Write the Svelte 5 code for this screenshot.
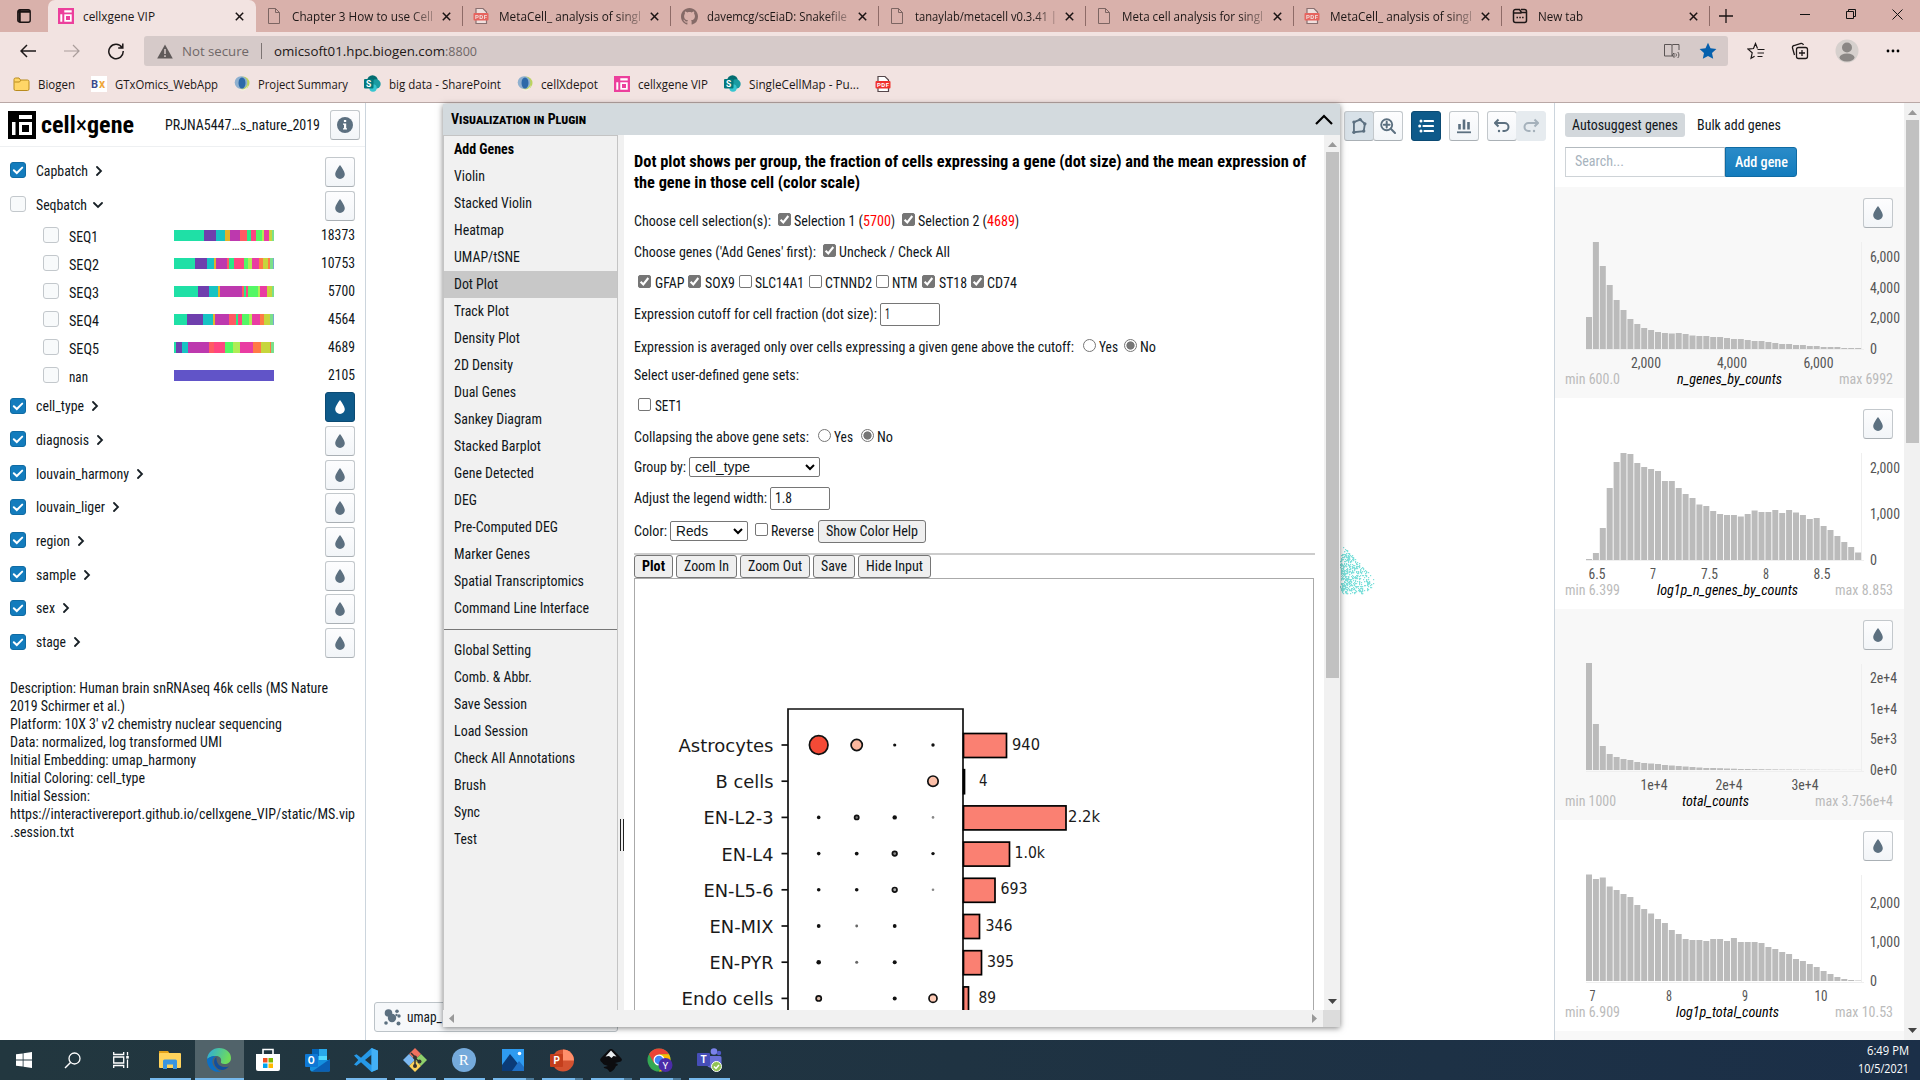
<script>
  const tabs = [
    { icon: 'vip', s: 'cellxgene VIP', w: 72, active: true },
    { icon: 'page', s: 'Chapter 3 How to use Cell', w: 141 },
    { icon: 'pdf', s: 'MetaCell_ analysis of singl', w: 142 },
    { icon: 'git', s: 'davemcg/scEiaD: Snakefile', w: 140 },
    { icon: 'page', s: 'tanaylab/metacell v0.3.41 |', w: 142 },
    { icon: 'page', s: 'Meta cell analysis for singl', w: 141 },
    { icon: 'pdf', s: 'MetaCell_ analysis of singl', w: 142 },
    { icon: 'new', s: 'New tab', w: 45 }
  ];
  const bookmarks = [
    ['folder', 'Biogen', 37], ['bx', 'GTxOmics_WebApp', 103], ['globe', 'Project Summary', 90],
    ['sp', 'big data - SharePoint', 112], ['globe', 'cellXdepot', 57], ['vip', 'cellxgene VIP', 70],
    ['sp', 'SingleCellMap - Pu...', 110], ['pdf2', '', 0]
  ];
  const G = '#1fe0a6', P = '#6f3fad', T = '#17c3c3', M = '#bd39ae', R = '#ff5a63', K = '#ff4581', L = '#54f766', Y = '#b0ec55', Q = '#e93ca2', O = '#ff7a45', V = '#c6d63c', A = '#e2b32c', E = '#7be08a', S = '#2bea86', B = '#79a9d0';
  const cats1 = [{ s: 'Capbatch', w: 52, on: true }, { s: 'Seqbatch', w: 51, on: false, open: true }];
  const seqs = [
    { s: 'SEQ1', w: 29, n: '18373', nw: 34, b: [[G, 30], [P, 12], [T, 9], [A, 5], [M, 10], [R, 7], [S, 4], [K, 5], [L, 6], [Y, 2], [Q, 5], [V, 3], [E, 2]] },
    { s: 'SEQ2', w: 30, n: '10753', nw: 34, b: [[G, 21], [P, 12], [T, 7], [A, 2], [M, 11], [R, 2], [S, 5], [K, 10], [L, 4], [Y, 4], [Q, 7], [O, 4], [V, 5], [O, 2], [E, 3], [B, 1]] },
    { s: 'SEQ3', w: 30, n: '5700', nw: 27, b: [[G, 24], [P, 11], [T, 9], [A, 2], [M, 22], [R, 2], [S, 2], [K, 2], [L, 10], [Y, 2], [Q, 7], [V, 5], [E, 2]] },
    { s: 'SEQ4', w: 30, n: '4564', nw: 27, b: [[G, 13], [P, 16], [T, 10], [A, 2], [M, 14], [R, 7], [S, 2], [K, 4], [L, 7], [Y, 3], [Q, 8], [O, 4], [V, 6], [E, 3], [B, 1]] },
    { s: 'SEQ5', w: 30, n: '4689', nw: 27, b: [[G, 2], [P, 6], [T, 6], [M, 21], [R, 5], [K, 11], [L, 8], [Y, 7], [Q, 13], [O, 8], [V, 9], [O, 1], [E, 3]] },
    { s: 'nan', w: 19, n: '2105', nw: 27, b: [['#6154c8', 100]] }
  ];
  const cats2 = [
    { s: 'cell_type', w: 48, on: true, sel: true }, { s: 'diagnosis', w: 53, on: true },
    { s: 'louvain_harmony', w: 93, on: true }, { s: 'louvain_liger', w: 69, on: true },
    { s: 'region', w: 34, on: true }, { s: 'sample', w: 40, on: true },
    { s: 'sex', w: 19, on: true }, { s: 'stage', w: 30, on: true }
  ];
  const desc = [
    ['Description: Human brain snRNAseq 46k cells (MS Nature', 318], ['2019 Schirmer et al.)', 115],
    ["Platform: 10X 3' v2 chemistry nuclear sequencing", 272], ['Data: normalized, log transformed UMI', 212],
    ['Initial Embedding: umap_harmony', 186], ['Initial Coloring: cell_type', 135], ['Initial Session:', 80],
    ['https://interactivereport.github.io/cellxgene_VIP/static/MS.vip', 345], ['.session.txt', 64]
  ];
  const menu1 = [
    ['Add Genes', 60], ['Violin', 31], ['Stacked Violin', 78], ['Heatmap', 50], ['UMAP/tSNE', 66], ['Dot Plot', 44],
    ['Track Plot', 55], ['Density Plot', 66], ['2D Density', 59], ['Dual Genes', 62], ['Sankey Diagram', 88],
    ['Stacked Barplot', 87], ['Gene Detected', 80], ['DEG', 23], ['Pre-Computed DEG', 104], ['Marker Genes', 76],
    ['Spatial Transcriptomics', 130], ['Command Line Interface', 135]
  ];
  const menu2 = [
    ['Global Setting', 77], ['Comb. & Abbr.', 78], ['Save Session', 73], ['Load Session', 74],
    ['Check All Annotations', 121], ['Brush', 32], ['Sync', 26], ['Test', 23]
  ];
  const genes = [['GFAP', 29.5, 1], ['SOX9', 30, 1], ['SLC14A1', 49, 0], ['CTNND2', 47, 0], ['NTM', 25.5, 0], ['ST18', 28, 1], ['CD74', 30, 1]];
  const hists = [
    {
      name: 'n_genes_by_counts', nw: 105, min: 'min 600.0', minw: 55, max: 'max 6992', maxw: 54,
      h: [32, 107, 83, 64, 49, 39, 30, 25, 21, 19, 17, 16, 15.5, 16, 15, 13.5, 13, 13, 12, 12, 11, 10, 10, 9, 8, 8, 7, 6, 5, 5, 4, 4, 3, 3, 2, 2, 2, 1, 1, 1],
      y: [['6,000', 70, 30], ['4,000', 101, 30], ['2,000', 131, 30], ['0', 162, 7]],
      x: [['2,000', 91, 30], ['4,000', 177, 30], ['6,000', 263.5, 30]]
    },
    {
      name: 'log1p_n_genes_by_counts', nw: 141, min: 'min 6.399', minw: 55, max: 'max 8.853', maxw: 58,
      h: [1, 7, 32, 72, 98, 107, 106, 97, 93, 91, 89, 79, 79, 72, 66, 62, 55.5, 54, 49, 46, 45, 45, 43.5, 46, 49.5, 48, 48, 50, 47, 50, 47.5, 45, 41, 42, 34, 30, 24, 18, 13, 7.5],
      y: [['2,000', 70, 30], ['1,000', 116, 30], ['0', 162, 7]],
      x: [['6.5', 42, 17], ['7', 98, 6], ['7.5', 154.5, 17], ['8', 211, 6], ['8.5', 267, 17]]
    },
    {
      name: 'total_counts', nw: 67, min: 'min 1000', minw: 51, max: 'max 3.756e+4', maxw: 78,
      h: [107, 46, 24, 16, 13, 11, 10, 8, 7, 6.5, 6, 5, 4.5, 4, 3.5, 3, 2.5, 2, 2, 1.8, 1.5, 1.3, 1, 1, 0.9, 0.8, 0.7, 0.6, 0.5, 0.5, 0.4, 0.4, 0.3, 0.3, 0.2, 0.2, 0.2, 0.1, 0.1, 0.1],
      y: [['2e+4', 69, 27], ['1e+4', 100, 27], ['5e+3', 130, 27], ['0e+0', 161, 27]],
      x: [['1e+4', 99, 27], ['2e+4', 174, 27], ['3e+4', 250, 27]]
    },
    {
      name: 'log1p_total_counts', nw: 103, min: 'min 6.909', minw: 55, max: 'max 10.53', maxw: 58,
      h: [106.5, 102, 103.5, 94.5, 91, 87, 84, 76, 72, 67.5, 62, 58, 51, 47, 42, 41, 41, 40, 42, 42, 40, 43, 39, 39, 39, 38, 34, 32, 29, 27, 22, 20, 17, 14, 10, 7, 4, 2, 1, 0.5],
      y: [['2,000', 83, 30], ['1,000', 122, 30], ['0', 161, 7]],
      x: [['7', 37.5, 6], ['8', 114, 6], ['9', 190, 6], ['10', 266, 13]]
    }
  ];
  // Each plot row: label, label width, dots [radius, fill] per gene, bar width, count, count x, count width
  const D = '#111', N = null;
  const plotRows = [
    ['Astrocytes', 95, [[9.3, '#f44a36'], [5.6, '#fcb79e'], [1.6, D], [1.7, D]], 43, '940', 378, 28],
    ['B cells', 58, [N, N, N, [5.2, '#fcbfa8']], 1, '4', 345, 8.5],
    ['EN-L2-3', 70, [[1.8, D], [2.1, '#777'], [2.2, D], [1.3, '#888']], 102.5, '2.2k', 434, 32],
    ['EN-L4', 52, [[1.8, D], [1.9, D], [2.3, '#888'], [1.7, D]], 46, '1.0k', 380.5, 30.5],
    ['EN-L5-6', 70, [[1.8, D], [1.8, D], [2.3, '#aaa'], [1.3, '#888']], 31.5, '693', 366.5, 27],
    ['EN-MIX', 64, [[1.9, D], [1.4, '#666'], [1.9, D], N], 16, '346', 351.5, 27],
    ['EN-PYR', 64, [[2.3, D], [1.5, '#666'], [2, D], N], 18, '395', 353, 27],
    ['Endo cells', 92, [[2.6, '#d8b8a8'], N, [2, D], [4, '#fdcab5']], 5, '89', 344.5, 17.5]
  ];
  const dotX = [184.7, 222.7, 260.7, 299];

  // Deterministic scatter of embedding points that fan out to the right
  let seed = 11;
  const rnd = () => ((seed = (seed * 16807) % 2147483647) / 2147483647);
  const cells = [];
  while (cells.length < 520) {
    const x = rnd() * 34, y = rnd() * 53;
    const top = 2 + x * 1.05, bottom = 52 - Math.max(0, x - 24) * 0.7;
    if (y > top && y < bottom && rnd() < 1.1 - x / 38 && (y > 12 || rnd() < 0.3)) cells.push([Math.round(x), Math.round(y)]);
  }
  const apps = ['start', 'search', 'task', 'files', 'edge', 'store', 'outlook', 'code', 'gitb', 'r', 'photos', 'ppt', 'ink', 'chrome', 'teams'];
  const running = { files: 1, edge: 1, code: 1, gitb: 1, r: 1, photos: 2, ppt: 2, ink: 2, chrome: 2, teams: 1 };
</script>

{#snippet t(s, w, cls = '')}
  <svg class="t {cls}" width={w} height="20"><text x="0" y="15" textLength={w} lengthAdjust="spacingAndGlyphs">{s}</text></svg>
{/snippet}

{#snippet drop()}
  <svg width="16" height="16" viewBox="0 0 16 16"><path fill="currentColor" d="M8 1C8 1 3.200 7 3.200 10.200a4.800 4.800 0 0 0 9.600 0C12.800 7 8 1 8 1z" /></svg>
{/snippet}

{#snippet cb(on)}
  <span class="cb" class:on>
    {#if on}<svg width="13" height="13" viewBox="0 0 13 13"><path d="M2.600 6.700l2.700 2.800 5-6.500" fill="none" stroke="#fff" stroke-width="2.100" /></svg>{/if}
  </span>
{/snippet}

{#snippet radio(on)}<span class="radio" class:on></span>{/snippet}

{#snippet fav(k)}
  {#if k === 'vip'}
    <svg width="16" height="16" viewBox="0 0 28 28"><rect width="28" height="28" fill="#ec3f9c" /><path fill="#fff" d="M4 11h3.500v13H4zM11 4h13v4H11z" /><rect x="12.500" y="12.500" width="10" height="10" fill="none" stroke="#fff" stroke-width="3" /></svg>
  {:else if k === 'page'}
    <svg width="16" height="18" viewBox="0 0 16 18"><path d="M2.500 1.500h7l4 4v11h-11zM9.500 1.500v4h4" fill="none" stroke="#7c6562" /></svg>
  {:else if k === 'pdf' || k === 'pdf2'}
    <svg class:faded={k === 'pdf'} width="16" height="18" viewBox="0 0 16 18"><path d="M3 1.500h7l3.500 3.500v11.500H3z" fill="#fff" stroke="#55464a" stroke-width="1.200" /><rect x=".5" y="6" width="15" height="7.500" rx="1" fill="#f0312d" /><text x="2" y="12" font-size="6" font-weight="700" fill="#fff" textLength="12">PDF</text></svg>
  {:else if k === 'git'}
    <svg width="17" height="17" viewBox="0 0 16 16"><path fill="#856a67" fill-rule="evenodd" d="M8 0C3.580 0 0 3.580 0 8c0 3.540 2.290 6.530 5.470 7.590.4.070.55-.17.55-.38 0-.19-.01-.82-.01-1.490-2.010.37-2.530-.49-2.690-.94-.09-.23-.48-.94-.82-1.130-.28-.15-.68-.52-.01-.53.63-.01 1.080.58 1.230.82.72 1.210 1.870.87 2.330.66.070-.52.28-.87.51-1.070-1.780-.2-3.640-.89-3.640-3.950 0-.87.31-1.590.82-2.150-.08-.2-.36-1.020.08-2.120 0 0 .67-.21 2.200.82.64-.18 1.320-.27 2-.27s1.360.09 2 .27c1.530-1.040 2.200-.82 2.200-.82.44 1.100.16 1.920.08 2.120.51.56.82 1.270.82 2.150 0 3.070-1.870 3.750-3.650 3.950.29.25.54.73.54 1.480 0 1.070-.01 1.930-.01 2.200 0 .21.15.46.55.38A8.010 8.010 0 0 0 16 8c0-4.420-3.580-8-8-8z" /></svg>
  {:else if k === 'new'}
    <svg width="16" height="16" viewBox="0 0 16 16"><path d="M1.500 3.500a2 2 0 0 1 2-2h4l2 3h5v8a2 2 0 0 1-2 2h-9a2 2 0 0 1-2-2zM1.500 5h8M9 1.500h3.500a2 2 0 0 1 2 2v2" fill="none" stroke="#1c1616" stroke-width="1.500" /><path d="M4.500 9.500h1.500M7.300 9.500h1.500M10.100 9.500h1.500" stroke="#1c1616" stroke-width="1.600" /></svg>
  {:else if k === 'folder'}
    <svg width="17" height="16" viewBox="0 0 17 16"><path d="M1 3.500a1.500 1.500 0 0 1 1.500-1.500H6l1.500 2h7A1.500 1.500 0 0 1 16 5.500V13a1.500 1.500 0 0 1-1.500 1.500h-12A1.500 1.500 0 0 1 1 13z" fill="#ffd667" stroke="#b98b1d" /><path d="M1.500 6h5l1.500-2" fill="none" stroke="#b98b1d" /></svg>
  {:else if k === 'bx'}
    <svg width="16" height="16" viewBox="0 0 16 16"><rect width="16" height="16" fill="#fff" /><text x="0" y="11.500" font-size="11" font-weight="700" fill="#3b4a8c">B</text><text x="8" y="11.500" font-size="12" font-weight="700" fill="#efa63a">x</text></svg>
  {:else if k === 'globe'}
    <svg width="16" height="16" viewBox="0 0 16 16"><circle cx="9" cy="7" r="6.500" fill="#bcd35f" /><circle cx="7" cy="6.500" r="6.300" fill="#8fb0cf" /><ellipse cx="8" cy="7" rx="3.500" ry="5.500" fill="#2c69a8" /><path d="M4 12c3 3 8 2 10-3-1 5-6 8-10 3z" fill="#f3f6e0" /></svg>
  {:else if k === 'sp'}
    <svg width="17" height="17" viewBox="0 0 17 17"><circle cx="8.500" cy="5.500" r="5.300" fill="#036c70" /><circle cx="12" cy="9" r="4.700" fill="#1a9ba1" /><circle cx="9" cy="13" r="3.700" fill="#37c6d0" /><rect y="4" width="9.500" height="9.500" rx="1" fill="#03787c" /><text x="2" y="11.700" font-size="8.500" font-weight="700" fill="#fff">S</text></svg>
  {/if}
{/snippet}

{#snippet cat(c)}
  <div class="cat">
    <span class="bcheck" class:on={c.on}>
      {#if c.on}<svg width="16" height="16" viewBox="0 0 16 16"><path d="M3.800 8.200l3 2.800 5.400-5.400" fill="none" stroke="#fff" stroke-width="2" stroke-linecap="round" /></svg>{/if}
    </span>
    {@render t(c.s, c.w)}
    <svg class="chev" width="10" height="10" viewBox="0 0 10 10"><path d={c.open ? 'M1 3l4 4 4-4' : 'M3 1l4 4-4 4'} fill="none" stroke="#182026" stroke-width="1.800" stroke-linecap="round" /></svg>
    <span class="btn push" class:sel={c.sel}>{@render drop()}</span>
  </div>
{/snippet}

<div class="screen">
  <header class="tabs">
    <svg class="actions" width="14" height="14" viewBox="0 0 14 14"><rect x=".8" y=".8" width="12.400" height="12.400" rx="2" fill="none" stroke="#1a1313" stroke-width="1.400" /><path d="M1 2.500h12M2.500 1v12" stroke="#1a1313" stroke-width="2.500" /></svg>
    {#each tabs as tab}
      <div class="tab" class:active={tab.active}>
        <span class="fav">{@render fav(tab.icon)}</span>
        <span class="title">{@render t(tab.s, tab.w, 'ui')}</span>
        <svg width="9" height="9" viewBox="0 0 9 9"><path d="M.8.8l7.400 7.400M8.200.8L.8 8.200" stroke="#1a1313" stroke-width="1.500" /></svg>
      </div>
    {/each}
    <svg class="plus" width="14" height="14" viewBox="0 0 14 14"><path d="M7 0v14M0 7h14" stroke="#1a1313" stroke-width="1.300" /></svg>
    <div class="win">
      <svg width="10" height="10"><path d="M0 5.500h10" stroke="#111" /></svg>
      <svg width="10" height="10"><path d="M.5 2.500h7v7h-7zM2.500 2.500v-2h7v7h-2" fill="none" stroke="#111" /></svg>
      <svg width="11" height="11"><path d="M.5.5l10 10M10.500.5l-10 10" stroke="#111" /></svg>
    </div>
  </header>

  <div class="address">
    <svg class="back" width="16" height="14" viewBox="0 0 16 14"><path d="M16 7H1M7 1L1 7l6 6" fill="none" stroke="#1d1818" stroke-width="1.500" /></svg>
    <svg class="fwd" width="16" height="14" viewBox="0 0 16 14"><path d="M0 7h15M9 1l6 6-6 6" fill="none" stroke="#aa9d9b" stroke-width="1.200" /></svg>
    <svg class="reload" width="18" height="18" viewBox="0 0 18 18"><path d="M15 5.500A7.200 7.200 0 1 0 16.200 9M15.800 1.500v4.500h-4.600" fill="none" stroke="#1d1818" stroke-width="1.500" /></svg>
    <div class="pill">
      <svg width="16" height="15" viewBox="0 0 16 15"><path d="M8 .5L15.800 14.500H.2z" fill="#605a5a" /><path d="M8 5v5M8 11.300v1.700" stroke="#d6cac9" stroke-width="1.500" /></svg>
      {@render t('Not secure', 67, 'ui grey')}
      <i></i>
      {@render t('omicsoft01.hpc.biogen.com', 171, 'ui')}
      {@render t(':8800', 32, 'ui grey')}
      <svg class="push" width="18" height="18" viewBox="0 0 18 18"><path d="M9 14H1.500V2.500H8q1 0 1 1V14M9 3.500q0-1 1-1h6V8M11 11l-1.500 1.500v1.500L11 15.500zM12.800 11.500c.8 1 .8 2 0 3M14.800 10c1.500 2 1.500 4 0 6" fill="none" stroke="#5b5454" /></svg>
      <svg class="star" width="18" height="18" viewBox="0 0 18 18"><path d="M9 .8l2.500 5.400 5.900.7-4.400 4 1.200 5.900L9 13.900l-5.200 2.900L5 10.900l-4.400-4 5.900-.7z" fill="#0560ad" /></svg>
    </div>
    <div class="tools">
      <svg width="18" height="18" viewBox="0 0 18 18"><path d="M10.500 6.500L8.500 1.500 6.500 6.500l-5.500.6 4.200 3.700-1.200 5.500 3.600-2M10.500 7.500h7M10.500 11h6.500M10.500 14.500h5" fill="none" stroke="#1d1818" stroke-width="1.200" /></svg>
      <svg width="18" height="18" viewBox="0 0 18 18"><rect x="5.500" y="5.500" width="11" height="11" rx="2" fill="none" stroke="#1d1818" stroke-width="1.300" /><path d="M11 8v6M8 11h6M3.500 13l-2-7a2 2 0 0 1 1.500-2.500l7-2a2 2 0 0 1 2.400 1.500" fill="none" stroke="#1d1818" stroke-width="1.300" /></svg>
      <svg width="24" height="24" viewBox="0 0 24 24"><circle cx="12" cy="12" r="11.500" fill="#d6d0cd" /><circle cx="12" cy="8.500" r="5" fill="#8b8785" /><ellipse cx="12" cy="18.500" rx="7.500" ry="4" fill="#8b8785" /></svg>
      <svg width="14" height="4" viewBox="0 0 14 4"><circle cx="2" cy="2" r="1.400" /><circle cx="7" cy="2" r="1.400" /><circle cx="12" cy="2" r="1.400" /></svg>
    </div>
  </div>

  <nav class="bookmarks">
    {#each bookmarks as [k, s, w]}
      <span class="bm">{@render fav(k)}{#if s}{@render t(s, w, 'ui small')}{/if}</span>
    {/each}
  </nav>

  <main>
    <aside class="left">
      <div class="brand">
        <svg width="28" height="28" viewBox="0 0 28 28"><rect width="28" height="28" /><path fill="#fff" d="M4 11h3.500v13H4zM11 4h13v4H11z" /><rect x="12.500" y="12.500" width="10" height="10" fill="none" stroke="#fff" stroke-width="3" /></svg>
        <svg class="logo" width="93" height="28"><text x="0" y="22" textLength="93" lengthAdjust="spacingAndGlyphs">cell<tspan class="x">×</tspan>gene</text></svg>
        {@render t('PRJNA5447…s_nature_2019', 155)}
        <span class="btn info"><svg width="16" height="16" viewBox="0 0 16 16"><circle cx="8" cy="8" r="8" fill="#5c7080" /><path d="M6.900 3h2.300v2H6.900zM6 6.500h3.200v4.700H10v1.300H6v-1.300h1V7.800H6z" fill="#fff" /></svg></span>
      </div>
      <div class="cats">
        {#each cats1 as c}{@render cat(c)}{/each}
        {#each seqs as q}
          <div class="seq">
            <span class="bcheck"></span>
            <span class="sl">{@render t(q.s, q.w)}</span>
            <span class="strip">{#each q.b as [c, w]}<i style="background:{c};flex-grow:{w}"></i>{/each}</span>
            <span class="push num">{@render t(q.n, q.nw)}</span>
          </div>
        {/each}
        {#each cats2 as c}{@render cat(c)}{/each}
      </div>
      <div class="desc">{#each desc as [s, w]}<div>{@render t(s, w)}</div>{/each}</div>
    </aside>

    <section class="canvas">
      <div class="toolbar">
        <div class="grp">
          <span class="btn act"><svg width="18" height="18" viewBox="0 0 16 16"><path d="M3.500 4.500L9 2.300l4.200 3.800-1 6.400-8.700 1z" fill="none" stroke="#5c7080" stroke-width="1.600" /><g fill="#5c7080"><circle cx="3.500" cy="4.500" r="1.500" /><circle cx="9" cy="2.300" r="1.500" /><circle cx="13.200" cy="6.100" r="1.500" /><circle cx="12.200" cy="12.500" r="1.500" /><circle cx="3.500" cy="13.500" r="1.500" /></g></svg></span>
          <span class="btn"><svg width="16" height="16" viewBox="0 0 16 16"><circle cx="6.700" cy="6.700" r="5.500" fill="none" stroke="#5c7080" stroke-width="1.900" /><path d="M6.700 3.800v5.800M3.800 6.700h5.800M10.800 10.800l4.200 4.200" stroke="#5c7080" stroke-width="2" stroke-linecap="round" /></svg></span>
        </div>
        <span class="btn sel"><svg width="16" height="16" viewBox="0 0 16 16"><g fill="#fff"><circle cx="3" cy="3" r="1.500" /><circle cx="1.700" cy="8" r="1.500" /><circle cx="3" cy="13" r="1.500" /></g><path d="M6.500 3H15M5.500 8H15M6.500 13H15" stroke="#fff" stroke-width="2.200" stroke-linecap="round" /></svg></span>
        <span class="btn"><svg width="16" height="16" viewBox="0 0 16 16"><path d="M3.500 6v5.500M8 1.500v10M12.500 4v7.500" stroke="#5c7080" stroke-width="2.600" /><path d="M1 14.300h14" stroke="#5c7080" stroke-width="1.800" /></svg></span>
        <div class="grp">
          <span class="btn"><svg width="16" height="16" viewBox="0 0 16 16"><path d="M1.500 5h9a4 4 0 0 1 0 8H8.500M4.500 1.500L1 5l3.500 3.500" fill="none" stroke="#5c7080" stroke-width="2" /><circle cx="5" cy="13" r="1.200" fill="#5c7080" /></svg></span>
          <span class="btn dis"><svg width="16" height="16" viewBox="0 0 16 16"><path d="M14.500 5h-9a4 4 0 0 0 0 8h2M11.500 1.500L15 5l-3.500 3.500" fill="none" stroke="#a5b1bb" stroke-width="2" /><circle cx="11" cy="13" r="1.200" fill="#a5b1bb" /></svg></span>
        </div>
      </div>
      <svg class="points" width="40" height="56">{#each cells as [x, y]}<rect {x} {y} width="1.200" height="1.200" fill="#7fe0db" />{/each}</svg>
      <div class="embed">
        <svg width="17" height="17" viewBox="0 0 17 17" fill="#5c7080"><circle cx="4.500" cy="4" r="3.800" /><circle cx="8" cy="9" r="4.200" /><circle cx="13" cy="2.200" r="1.800" /><circle cx="15" cy="7" r="1.700" /><circle cx="12.500" cy="6" r="1.200" /><circle cx="2" cy="14" r="1.800" /><circle cx="14.500" cy="14.500" r="2" /></svg>
        {@render t('umap_', 35)}
      </div>

      <div class="vip">
        <div class="vhead">
          {@render t('Visualization in Plugin', 135, 'b caps')}
          <svg width="18" height="11" viewBox="0 0 18 11"><path d="M1 10l8-8 8 8" fill="none" stroke="#000" stroke-width="2.200" /></svg>
        </div>
        <div class="vbody">
          <div class="menu">
            {#each menu1 as [s, w], i}<div class="item" class:cur={s === 'Dot Plot'}>{@render t(s, w, i ? '' : 'b')}</div>{/each}
            <hr />
            {#each menu2 as [s, w]}<div class="item">{@render t(s, w)}</div>{/each}
          </div>
          <div class="split"><b></b></div>
          <div class="content">
            <div class="lead">{@render t('Dot plot shows per group, the fraction of cells expressing a gene (dot size) and the mean expression of', 672, 'b big')}{@render t('the gene in those cell (color scale)', 226, 'b big')}</div>
            <div class="form">
              <div class="row">{@render t('Choose cell selection(s):', 137)}{@render cb(true)}{@render t('Selection 1 (', 69)}{@render t('5700', 28, 'red')}{@render t(')', 4)}{@render cb(true)}{@render t('Selection 2 (', 69)}{@render t('4689', 28, 'red')}{@render t(')', 4)}</div>
              <div class="row">{@render t("Choose genes ('Add Genes' first):", 182)}{@render cb(true)}{@render t('Uncheck / Check All', 111)}</div>
              <div class="row genes">{#each genes as [s, w, on]}{@render cb(!!on)}{@render t(s, w)}{/each}</div>
              <div class="row">{@render t('Expression cutoff for cell fraction (dot size):', 243)}<span class="field">{@render t('1', 5)}</span></div>
              <div class="row">{@render t('Expression is averaged only over cells expressing a given gene above the cutoff:', 440)}<u></u>{@render radio(false)}{@render t('Yes', 19)}{@render radio(true)}{@render t('No', 16)}</div>
              <div class="row">{@render t('Select user-defined gene sets:', 165)}</div>
              <div class="row genes">{@render cb(false)}{@render t('SET1', 27)}</div>
              <div class="row">{@render t('Collapsing the above gene sets:', 175)}<u></u>{@render radio(false)}{@render t('Yes', 19)}<u></u>{@render radio(true)}{@render t('No', 16)}</div>
              <div class="row">{@render t('Group by:', 52)}<span class="select wide">{@render t('cell_type', 55, 'arial')}<svg width="10" height="8" viewBox="0 0 10 8"><path d="M1 2l4 4 4-4" fill="none" stroke="#000" stroke-width="2" /></svg></span></div>
              <div class="row">{@render t('Adjust the legend width:', 133)}<span class="field">{@render t('1.8', 17)}</span></div>
              <div class="row">{@render t('Color:', 33)}<span class="select">{@render t('Reds', 32, 'arial')}<svg width="10" height="8" viewBox="0 0 10 8"><path d="M1 2l4 4 4-4" fill="none" stroke="#000" stroke-width="2" /></svg></span>{@render cb(false)}{@render t('Reverse', 43)}<span class="pb">{@render t('Show Color Help', 92)}</span></div>
            </div>
            <div class="actionsrow">
              <span class="pb">{@render t('Plot', 23, 'b')}</span><span class="pb">{@render t('Zoom In', 45)}</span><span class="pb">{@render t('Zoom Out', 54)}</span><span class="pb">{@render t('Save', 26)}</span><span class="pb">{@render t('Hide Input', 57)}</span>
            </div>
            <div class="plot">
              <svg class="fig" width="678" height="432" viewBox="1 1 678 432">
                <path d="M154 440V131H329V440" fill="none" stroke="#111" stroke-width="1.700" />
                {#each plotRows as [s, w, dots, bw, n, nx, nw], i}
                  {@const y = 167 + i * 36.2}
                  <text x={139.5 - w} y={y + 7} font-size="18" textLength={w} lengthAdjust="spacingAndGlyphs">{s}</text>
                  <path d="M147.500 {y}H154" stroke="#111" stroke-width="1.700" />
                  {#each dots as d, j}{#if d}<circle cx={dotX[j]} cy={y} r={d[0]} fill={d[1]} stroke="#111" stroke-width={d[0] > 2 && d[1] !== D ? 1.7 : d[1] === '#777' ? 1.5 : 0} />{/if}{/each}
                  <rect x="329.500" y={y - 11.5} width={bw} height="24" fill="#fa8072" stroke="#000" stroke-width="1.700" />
                  <text x={nx} y={y + 4.5} font-size="15" textLength={nw} lengthAdjust="spacingAndGlyphs">{n}</text>
                {/each}
              </svg>
            </div>
          </div>
          <div class="vscroll"><svg width="9" height="5"><path d="M0 5l4.500-5L9 5z" fill="#999" /></svg><b></b><svg width="9" height="5"><path d="M0 0l4.500 5L9 0z" fill="#444" /></svg></div>
        </div>
        <div class="hscroll"><svg width="5" height="9"><path d="M5 0L0 4.500 5 9z" fill="#999" /></svg><svg width="5" height="9"><path d="M0 0l5 4.500L0 9z" fill="#999" /></svg><b></b></div>
      </div>
    </section>

    <aside class="right">
      <div class="rtop">
        <div class="rtabs"><span class="on">{@render t('Autosuggest genes', 106)}</span><span>{@render t('Bulk add genes', 84)}</span></div>
        <div class="search"><span class="inp">{@render t('Search...', 49, 'ph')}</span><span class="add">{@render t('Add gene', 53, 'm')}</span></div>
      </div>
      {#each hists as h}
        <div class="hist">
          <svg class="chart" width="349" height="184">
            <path d="M306.500 55V162M31 162.500H309" stroke="#efefef" fill="none" />
            {#each h.h as v, i}<rect x={31 + i * 6.9} y={h.y.at(-1)[1] - v} width="6" height={v} fill="#bbb" />{/each}
            {#each h.y as [s, y, w]}<text x="315" y={y + 5} textLength={w} lengthAdjust="spacingAndGlyphs">{s}</text>{/each}
            {#each h.x as [s, x, w]}<text x={x - w / 2} y="181" textLength={w} lengthAdjust="spacingAndGlyphs">{s}</text>{/each}
          </svg>
          <span class="btn">{@render drop()}</span>
          <div class="names">{@render t(h.min, h.minw, 'light')}{@render t(h.name, h.nw, 'it')}{@render t(h.max, h.maxw, 'light')}</div>
        </div>
      {/each}
      <div class="rest"></div>
    </aside>
    <div class="pscroll"><svg width="9" height="5"><path d="M0 5l4.500-5L9 5z" fill="#999" /></svg><b></b><svg width="9" height="5"><path d="M0 0l4.500 5L9 0z" fill="#444" /></svg></div>
  </main>

  <footer>
    {#each apps as a}
      <span class="app" class:focus={a === 'edge'} class:run={running[a]} class:multi={running[a] === 2}>
        {#if a === 'start'}<svg width="16" height="16" viewBox="0 0 16 16"><path fill="#fff" d="M0 2.300L6.700 1.400V7.600H0zM7.500 1.300L16 0v7.600H7.500zM0 8.400h6.700v6.200L0 13.700zM7.500 8.400H16V16l-8.500-1.300z" /></svg>
        {:else if a === 'search'}<svg width="17" height="17" viewBox="0 0 17 17"><circle cx="10.500" cy="6.500" r="5.500" fill="none" stroke="#fff" stroke-width="1.300" /><path d="M6.500 10.500L1 16" stroke="#fff" stroke-width="1.400" /></svg>
        {:else if a === 'task'}<svg width="17" height="16" viewBox="0 0 17 16"><path d="M.7 0v2.500h10V0M.7 5h10v6h-10zM.7 16v-2.500h10V16M14.500 0v3.500M14.500 7.500V16" fill="none" stroke="#fff" stroke-width="1.300" /><rect x="13.200" y="4" width="2.600" height="2.600" fill="#fff" /></svg>
        {:else if a === 'files'}<svg width="24" height="20" viewBox="0 0 24 20"><path d="M1 1h9l2 3H1z" fill="#e3a21a" /><rect x="1" y="3" width="22" height="15" rx="1" fill="#ffd35c" /><path d="M5 19v-8a1.500 1.500 0 0 1 1.500-1.500h11A1.500 1.500 0 0 1 19 11v8h-4v-4.500H9V19z" fill="#3b95e0" /></svg>
        {:else if a === 'edge'}<svg width="24" height="24" viewBox="0 0 24 24"><defs><linearGradient id="eg" x1="0" y1="0" x2="1" y2=".3"><stop offset="0" stop-color="#2aa9e0" /><stop offset="1" stop-color="#6fdc5b" /></linearGradient></defs><path d="M0 11C1 4 6 0 12 0c7 0 12 4.500 12 10 0 4-3 6-6.500 6-3 0-4-1-3.500-2.500.7-3-1-5.500-5-5.500-4 0-7 1.500-9 3z" fill="url(#eg)" /><path d="M0 11c2-2 5-3.500 9-3-3 1.500-4 4-3.500 7 .8 4 5 8 9 8.500C6 25.500-.5 19 0 11z" fill="#0c6fc5" /><path d="M9.500 9C6 11.500 6.500 17 10 20c4 3.500 9 2 12-1.800-2 1-5 1.300-7.500.3-4-1.500-5.500-6-5-9.500z" fill="#124f9d" /></svg>
        {:else if a === 'store'}<svg width="24" height="24" viewBox="0 0 24 24"><path d="M7 7V1.500h10V7" fill="none" stroke="#fff" stroke-width="1.600" /><path d="M0 6h24v15a2 2 0 0 1-2 2H2a2 2 0 0 1-2-2z" fill="#fff" /><path fill="#f25022" d="M7 10h4.500v4.500H7z" /><path fill="#7fba00" d="M12.500 10H17v4.500h-4.500z" /><path fill="#00a4ef" d="M7 15.500h4.500V20H7z" /><path fill="#ffb900" d="M12.500 15.500H17V20h-4.500z" /></svg>
        {:else if a === 'outlook'}<svg width="25" height="23" viewBox="0 0 25 23"><rect x="7" width="15" height="15" fill="#28a8ea" /><path d="M7 0h7v7H7z" fill="#0364b8" /><path d="M14 7h8v7h-8z" fill="#50d9ff" /><path d="M5 11l20 0v10a1.500 1.500 0 0 1-1.500 1.500h-17L5 21z" fill="#1490df" /><path d="M25 10L7 22.500h17a1 1 0 0 0 1-1z" fill="#0a5fb4" /><rect y="5" width="13" height="13" rx="1" fill="#0f78d4" /><text x="2.800" y="15" font-size="10" font-weight="700" fill="#fff">O</text></svg>
        {:else if a === 'code'}<svg width="24" height="24" viewBox="0 0 24 24"><path d="M17.500 0L24 2.800v18.400L17.500 24 7 14.300l-4.500 3.500L0 16.500 4.300 12 0 7.500l2.500-1.300L7 9.700zM17.500 6.800L11 12l6.500 5.200z" fill="#2699e8" fill-rule="evenodd" /><path d="M17.500 0L24 2.800v18.400L17.500 24z" fill="#43b0f5" /></svg>
        {:else if a === 'gitb'}<svg width="24" height="24" viewBox="0 0 24 24"><path d="M12 0l6 6-6 6-6-6z" fill="#f0715f" /><path d="M6 6l6 6-6 6-6-6z" fill="#7cb9f2" /><path d="M18 6l6 6-6 6-6-6z" fill="#8fd16b" /><path d="M12 12l6 6-6 6-6-6z" fill="#fcd25a" /><path d="M8 5l4 4v8M12 10l4 3.500" fill="none" stroke="#333" stroke-width="1.500" /><circle cx="12" cy="18" r="2" fill="#333" /><circle cx="16.500" cy="13.500" r="2" fill="#333" /><circle cx="12" cy="9.500" r="2" fill="#333" /></svg>
        {:else if a === 'r'}<svg width="24" height="24" viewBox="0 0 24 24"><circle cx="12" cy="12" r="12" fill="#75aadb" /><text class="serif" x="6.700" y="17" font-size="15" fill="#fff">R</text></svg>
        {:else if a === 'photos'}<svg width="22" height="22" viewBox="0 0 22 22"><rect width="22" height="22" fill="#2e9bf0" /><path d="M0 22V16L8 5l14 17z" fill="#0b3b77" /><path d="M10 22l7-10 5 6v4z" fill="#1f6fc4" /><circle cx="17.500" cy="4.500" r="1.800" fill="#fff" /></svg>
        {:else if a === 'ppt'}<svg width="24" height="23" viewBox="0 0 24 23"><circle cx="13" cy="11.500" r="11" fill="#d35230" /><path d="M13 .5a11 11 0 0 1 11 11H13z" fill="#ff8f6b" /><rect y="5" width="13" height="13" rx="1" fill="#c43e1c" /><text x="3.500" y="15" font-size="10" font-weight="700" fill="#fff">P</text></svg>
        {:else if a === 'ink'}<svg width="22" height="23" viewBox="0 0 22 23"><path d="M11 0c1 0 2 .7 3 1.700l7 7.300c2 2 .5 3.500-2 4l-4 1c3 1 4 2 1 3l-1 2c-1 2-4 4-5 4s-1-2-3-3-4-1-3-2l4-1c-3-1-5-1.500-5.500-3C1 13-1 11 1 9l7-7.300C9 .7 10 0 11 0z" fill="#0c0c0f" /><path d="M11 1.500l5.500 6-3-.5-2 2-2.500-2-3.500.5z" fill="#e9ecef" /></svg>
        {:else if a === 'chrome'}<svg width="26" height="24" viewBox="0 0 26 24"><circle cx="12" cy="12" r="11.500" fill="#34a853" /><path d="M2 6.300A11.500 11.500 0 0 1 22 6.300H12L7 15z" fill="#ea4335" /><path d="M22 6.300A11.500 11.500 0 0 1 12 23.500L17 14.700 12 6.300z" fill="#fbbc05" /><circle cx="12" cy="12" r="5.500" fill="#fff" /><circle cx="12" cy="12" r="4.300" fill="#4285f4" /><circle cx="18.500" cy="17" r="7" fill="#4b2ca8" /><text x="15.500" y="21" font-size="9.500" fill="#fff">Y</text></svg>
        {:else}<svg width="25" height="24" viewBox="0 0 25 24"><circle cx="17" cy="3.500" r="3.300" fill="#7b83eb" /><circle cx="22" cy="5" r="2.200" fill="#5059c9" /><path d="M9 8h14a1.500 1.500 0 0 1 1.500 1.500V16a6 6 0 0 1-9 4A7 7 0 0 1 9 16z" fill="#6a70d8" /><rect y="5" width="13" height="13" rx="1" fill="#464eb8" /><text x="3.500" y="15" font-size="10" font-weight="700" fill="#fff">T</text><circle cx="19.500" cy="18.500" r="5" fill="#92c353" stroke="#fff" /><path d="M17 18.500l2 2 3-3.500" fill="none" stroke="#fff" stroke-width="1.500" /></svg>{/if}
      </span>
    {/each}
    <div class="clock">{@render t('6:49 PM', 42, 'ui white')}{@render t('10/5/2021', 51, 'ui white')}</div>
  </footer>
</div>

<style>
  :global(body) { background: #fff; overflow: hidden; }
  .screen { width: 1920px; height: 1080px; display: flex; flex-direction: column; font-family: Roboto, "Liberation Sans", sans-serif; font-size: 14px; overflow: hidden; }
  .screen * { box-sizing: border-box; }
  svg { display: block; flex: none; }
  .t { overflow: visible; font-family: "Roboto Condensed", Roboto, sans-serif; font-stretch: 75%; font-size: 14px; fill: #10161a; }
  .t.b { font-weight: 700; fill: #000; }
  .t.m { font-weight: 500; fill: #fff; }
  .t.big { font-size: 16px; height: 21px; }
  .t.caps { font-variant: small-caps; }
  .t.red { fill: #f00; }
  .t.ph { fill: #a7b3bd; }
  .t.light { fill: #bbb; }
  .t.it { font-style: italic; fill: #000; }
  .t.arial { font-family: "Liberation Sans", sans-serif; font-stretch: 100%; font-size: 14px; }
  .t.ui { font-family: "Open Sans", "Noto Sans", sans-serif; font-stretch: 100%; font-size: 12.500px; fill: #1d1716; }
  .t.small { font-size: 12px; }
  .t.grey { fill: #6f6767; }
  .t.white { fill: #fff; font-size: 12px; }
  .serif { font-family: "Liberation Serif", serif; }
  .faded { opacity: .6; }
  .push { margin-left: auto; }

  .tabs { height: 32px; background: #d9b1ab; display: flex; align-items: center; }
  .actions { margin: 0 17px; }
  .tab { width: 207.700px; height: 32px; display: flex; align-items: center; padding: 0 12px 0 10px; }
  .tab.active { background: #f2e3e1; border-radius: 7px 7px 0 0; }
  .tab:not(.active) { background: linear-gradient(#8e6b67, #8e6b67) right center / 1px 20px no-repeat; }
  .fav { width: 25px; }
  .title { flex: 1; height: 20px; margin-right: 8px; }
  .tab:not(.active) .fav { width: 26px; }
  .tab:not(.active) .title { mask-image: linear-gradient(90deg, #000 118px, transparent 150px); }
  .plus { margin-left: 9px; }
  .win { margin-left: auto; display: flex; align-items: center; gap: 36px; padding-right: 17px; margin-top: -4px; }

  .address { height: 38px; background: #f2e3e1; display: flex; align-items: center; }
  .back { margin-left: 20px; }
  .fwd { margin-left: 28px; }
  .reload { margin-left: 27px; }
  .pill { margin-left: 19px; width: 1584px; height: 30px; background: #d6cac9; border-radius: 3px; display: flex; align-items: center; padding: 0 11px 0 13px; }
  .pill .t { margin-left: 9px; font-size: 13px; }
  .pill i { width: 1px; height: 16px; background: #7c7473; margin: 0 3px 0 12px; }
  .pill i + .t + .t { margin-left: 0; }
  .star { margin-left: 18px; }
  .tools { flex: 1; display: flex; align-items: center; gap: 26px; padding-left: 19px; }
  .tools svg:last-child { margin-left: 1px; }

  .bookmarks { height: 33px; background: #f2e3e1; border-bottom: 1px solid #b9a8a6; display: flex; align-items: center; gap: 16px; padding: 0 13px 5px; }
  .bm { display: flex; align-items: center; gap: 8px; }

  main { flex: 1; min-height: 0; display: flex; }
  .left { width: 366px; border-right: 1px solid #ccd5dd; }
  .brand { height: 44px; border-bottom: 1px solid #eef0f2; display: flex; align-items: center; padding: 0 5px 0 8px; }
  .logo { margin: 0 31px 0 5px; overflow: visible; font: 700 24px "Roboto Condensed", Roboto, sans-serif; font-stretch: 75%; }
  .logo .x { font-weight: 400; }
  .btn { width: 30px; height: 30px; border-radius: 3px; border: 1px solid #c3c8cc; border-bottom-color: #aab0b5; background: linear-gradient(#fdfdfe, #f2f5f8); display: flex; align-items: center; justify-content: center; color: #5c7080; }
  .btn.sel { background: #0e5a8a; border-color: #0b4a73; color: #fff; }
  .info { margin-left: auto; }
  .cats { padding-top: 8px; }
  .cat { height: 33.700px; display: flex; align-items: center; padding: 0 10px; }
  .cat .t, .cat .chev { margin-top: -2px; }
  .bcheck { width: 16px; height: 16px; border-radius: 3px; border: 1px solid #c3c8cc; background: #f8fafb; margin: -3px 10px 0 0; }
  .bcheck.on { background: #137cbd; border-color: #106ba3; }
  .bcheck svg { margin: -1px; }
  .chev { margin-left: 6px; }
  .seq { height: 28px; display: flex; align-items: center; padding: 0 10px 0 43px; }
  .sl { width: 105px; padding-top: 2px; }
  .strip { width: 100px; height: 11px; display: flex; margin-top: -2px; }
  .strip i { flex-basis: 0; }
  .num { margin-top: -2px; }
  .desc { padding: 17.700px 10px 0; }
  .desc div { height: 18px; }

  .canvas { flex: 1; position: relative; }
  .toolbar { display: flex; gap: 8px; justify-content: flex-end; padding: 8px 8px 0; }
  .grp { display: flex; }
  .grp .btn + .btn { margin-left: -1px; }
  .btn.act { background: #d8e1e8; }
  .btn.dis { background: #e6ebef; border-color: #e6ebef; }
  .points { position: absolute; left: 974px; top: 438px; }
  .embed { position: absolute; left: 8px; bottom: 8px; width: 244px; height: 30px; border: 1px solid #bcc3c8; border-radius: 3px; background: #f6f8fa; display: flex; align-items: center; gap: 6px; padding-left: 9px; }

  .vip { position: absolute; left: 77px; top: 1px; width: 897px; height: 923px; background: #fff; box-shadow: 0 1px 6px rgba(0, 0, 0, .5); display: flex; flex-direction: column; }
  .vhead { height: 31px; background: #d3dade; display: flex; align-items: center; justify-content: space-between; padding: 0 7px 1px 8px; }
  .vbody { flex: 1; min-height: 0; display: flex; }
  .menu { width: 175px; background: #f1f1f1; border: 1px solid #c4c4c4; border-bottom: 0; }
  .item { height: 27px; padding: 3px 0 0 10px; }
  .item.cur { background: #c8c8c8; }
  hr { border: 0; border-top: 1px solid #777; margin: 7px 0; }
  .split { width: 6px; background: #f1f1f1; display: flex; justify-content: center; padding: 684px 0 0 2px; }
  .split b { width: 4px; height: 32px; flex: none; border: solid #222; border-width: 0 1px; }
  .content { width: 700px; padding: 0 9px 0 10px; display: flex; flex-direction: column; overflow: hidden; }
  .lead { height: 70px; padding-top: 17px; flex: none; }
  .form { flex: none; display: grid; grid-template-rows: 32px 30px 32px 30px 36px 20px 42px 20px 40px 22px 44px; }
  .row { display: flex; align-items: center; }
  .cb { width: 13px; height: 13px; border: 1px solid #767676; border-radius: 2px; background: #fff; margin: -3px 3px 0 7px; }
  .cb.on { background: #767676; }
  .cb svg { margin: -1px; }
  .genes .cb { margin-left: 4.300px; margin-right: 3.300px; }
  .radio { width: 13px; height: 13px; border: 1px solid #767676; border-radius: 50%; background: #fff; margin: -3px 3px 0 6px; }
  .radio.on { background: radial-gradient(circle, #767676 0 3.700px, #fff 4.500px); }
  .row u { width: 2.500px; }
  .field { width: 60px; height: 23px; border: 1px solid #767676; border-radius: 2px; margin-left: 3px; padding: 0 0 0 4px; }
  .select { width: 78px; height: 20px; border: 1px solid #767676; border-radius: 2px; margin-left: 3px; padding: 0 4px 0 5px; display: flex; align-items: center; justify-content: space-between; }
  .select.wide { width: 131px; }
  .pb { height: 23px; border: 1px solid #767676; border-radius: 3px; background: #efefef; padding: 0 7px; }
  .row .pb { margin-left: 4px; }
  .actionsrow { flex: none; height: 25px; border-top: 2px solid #ccc; display: flex; gap: 3px; }
  .plot { flex: 1; min-height: 0; border: 1px solid #aaa; border-bottom: 0; overflow: hidden; width: 680px; }
  .fig { font-family: "DejaVu Sans", sans-serif; fill: #1a1a1a; }
  .vscroll { flex: 1; background: #f1f1f1; display: flex; flex-direction: column; align-items: center; padding: 7px 0 6px; }
  .vscroll b { width: 13px; height: 526px; background: #c1c1c1; margin: 5px 0 auto; }
  .hscroll { height: 17px; background: #f1f1f1; display: flex; align-items: center; padding-left: 6px; }
  .hscroll svg + svg { margin-left: auto; }
  .hscroll b { width: 17px; height: 17px; background: #dcdcdc; margin-left: 6px; }

  .right { width: 350px; border-left: 1px solid #ccd5dd; overflow: hidden; }
  .rtop { height: 84px; padding: 10px 0 0 10px; }
  .rtabs { display: flex; gap: 5px; }
  .rtabs span { height: 24px; padding: 2px 7px; border-radius: 3px; }
  .rtabs .on { background: #d3d8dc; }
  .search { display: flex; margin-top: 10px; }
  .inp { width: 160px; height: 30px; border: 1px solid #ced3d7; border-top-color: #b3babf; padding: 3px 0 0 9px; }
  .add { width: 72px; height: 30px; border: 1px solid #106ba3; border-radius: 0 3px 3px 0; background: linear-gradient(#2a8bc8, #137cbd); padding: 4px 0 0 9px; }
  .hist { height: 211px; position: relative; }
  .hist:nth-child(even), .rest { background: #f8f8f8; }
  .rest { height: 20px; }
  .hist .btn { position: absolute; right: 11px; top: 11px; }
  .chart { overflow: visible; font-family: "Roboto Condensed", Roboto, sans-serif; font-stretch: 75%; font-size: 14px; fill: #555; }
  .names { display: flex; justify-content: space-between; padding: 0 11px 0 10px; margin-top: -2px; }
  .pscroll { width: 16px; background: #f1f1f1; display: flex; flex-direction: column; align-items: center; padding: 7px 0 7px; }
  .pscroll b { width: 13px; height: 323px; background: #c1c1c1; margin: 5px 0 auto; }

  footer { height: 40px; background: linear-gradient(90deg, #22373f, #1f3342 50%, #1b2f48); display: flex; }
  .app { width: 49px; height: 40px; display: flex; align-items: center; justify-content: center; }
  .app:nth-child(-n + 3) { width: 48.600px; }
  .app.run { background: linear-gradient(#76b9ed, #76b9ed) center bottom / 41px 2px no-repeat; }
  .app.multi { background: linear-gradient(90deg, #76b9ed 33px, #4c7a9a 33px) center bottom / 41px 2px no-repeat; }
  .app.focus { background: linear-gradient(#76b9ed, #76b9ed) bottom / 100% 2px no-repeat, #51636a; }
  .clock { margin-left: auto; padding: 0 11px 0 0; display: flex; flex-direction: column; align-items: flex-end; }
  .clock .t { height: 18px; }
</style>
